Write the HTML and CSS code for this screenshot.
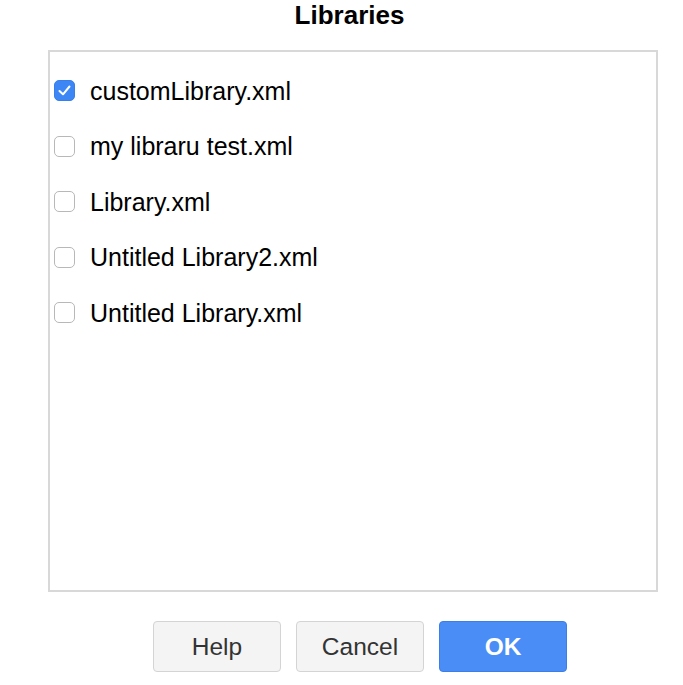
FILE: index.html
```html
<!DOCTYPE html>
<html>
<head>
<meta charset="utf-8">
<link rel="stylesheet" href="styles.css">
</head>
<body>
<div class="dialog">
  <h1 class="title">Libraries</h1>
  <div class="list">
    <div class="row">
      <span class="box checked"><svg width="13" height="11" viewBox="0 0 13 11"><path d="M1.5 6 L5 9.3 L11.5 1.5" fill="none" stroke="#fff" stroke-width="2" stroke-linecap="round" stroke-linejoin="round"/></svg></span>
      <span class="label">customLibrary.xml</span>
    </div>
    <div class="row">
      <span class="box"></span>
      <span class="label">my libraru test.xml</span>
    </div>
    <div class="row">
      <span class="box"></span>
      <span class="label">Library.xml</span>
    </div>
    <div class="row">
      <span class="box"></span>
      <span class="label">Untitled Library2.xml</span>
    </div>
    <div class="row">
      <span class="box"></span>
      <span class="label">Untitled Library.xml</span>
    </div>
  </div>
  <div class="buttons">
    <button class="btn">Help</button>
    <button class="btn">Cancel</button>
    <button class="btn primary">OK</button>
  </div>
</div>
</body>
</html>
```

FILE: styles.css
```css
html, body {
  margin: 0;
  padding: 0;
  background: #fff;
}
body {
  font-family: "Liberation Sans", Arial, Helvetica, sans-serif;
  color: #000;
}
.dialog {
  width: 683px;
  height: 685px;
}
.title {
  margin: 0;
  height: 50px;
  font-size: 26px;
  font-weight: bold;
  line-height: 30px;
  text-align: center;
  padding-left: 16px;
  box-sizing: border-box;
}
.list {
  margin-left: 48px;
  width: 610px;
  height: 542px;
  box-sizing: border-box;
  border: 2px solid #d8d8d8;
  padding: 11px 0 0 3px;
  display: flex;
  flex-direction: column;
}
.row {
  height: 55.5px;
  display: flex;
  align-items: center;
  gap: 15px;
  padding-left: 1px;
}
.box {
  width: 21px;
  height: 21px;
  box-sizing: border-box;
  border: 1px solid #b8b8b8;
  border-radius: 5px;
  background: #fff;
  display: flex;
  align-items: center;
  justify-content: center;
  flex: none;
}
.box.checked {
  background: #3d86f6;
  border-color: #3a7fe8;
}
.label {
  font-size: 25px;
  line-height: 30px;
  color: #000;
}
.buttons {
  margin-top: 29px;
  padding-left: 153px;
  display: flex;
  gap: 15px;
}
.btn {
  width: 128px;
  height: 51px;
  box-sizing: border-box;
  border: 1px solid #d4d4d4;
  border-radius: 4px;
  background: #f4f4f4;
  font-family: "Liberation Sans", Arial, Helvetica, sans-serif;
  font-size: 24.5px;
  color: #333;
  padding: 0;
}
.btn.primary {
  background: #4a8df6;
  border-color: #3b7fe6;
  color: #fff;
  font-weight: bold;
}
```
